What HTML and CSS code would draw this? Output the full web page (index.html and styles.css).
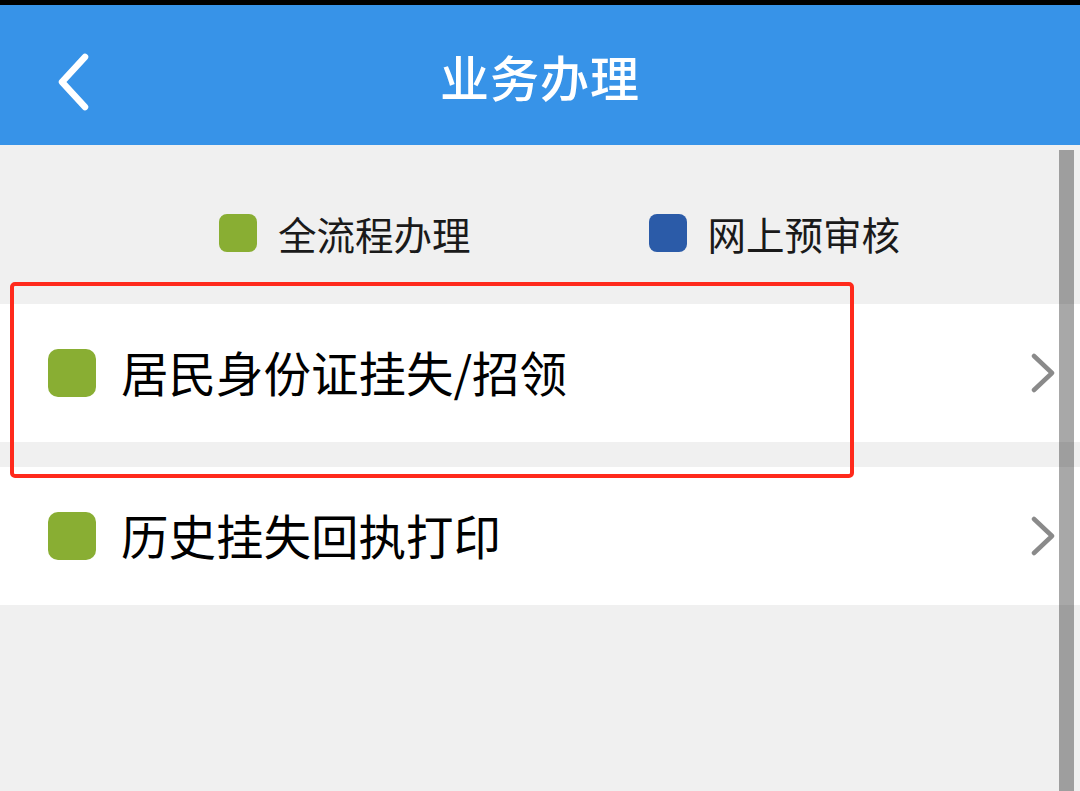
FILE: index.html
```html
<!DOCTYPE html>
<html lang="zh-CN">
<head>
<meta charset="utf-8">
<link rel="stylesheet" href="styles.css">
</head>
<body>
<div class="status"></div>
<header class="topbar">
  <svg class="back" width="40" height="60" viewBox="0 0 40 60"><path d="M31 5 L8 30 L31 55" fill="none" stroke="#fff" stroke-width="6.5" stroke-linecap="round" stroke-linejoin="round"/></svg>
  <h1 class="title">业务办理</h1>
</header>
<main class="content">
  <div class="legend">
    <div class="legend-item"><span class="dot green"></span><span>全流程办理</span></div>
    <div class="legend-item"><span class="dot blue"></span><span>网上预审核</span></div>
  </div>
  <div class="list">
    <div class="row">
      <span class="mark green"></span>
      <span class="label">居民身份证挂失/招领</span>
      <svg class="chev" width="26" height="40" viewBox="0 0 26 40"><path d="M4 3 L22 20 L4 37" fill="none" stroke="#8a8a8a" stroke-width="4.5" stroke-linecap="round" stroke-linejoin="round"/></svg>
    </div>
    <div class="row">
      <span class="mark green"></span>
      <span class="label">历史挂失回执打印</span>
      <svg class="chev" width="26" height="40" viewBox="0 0 26 40"><path d="M4 3 L22 20 L4 37" fill="none" stroke="#8a8a8a" stroke-width="4.5" stroke-linecap="round" stroke-linejoin="round"/></svg>
    </div>
  </div>
  <div class="highlight"></div>
  <div class="scrollbar"></div>
</main>
</body>
</html>
```
FILE: styles.css
```css
html, body {
  margin: 0;
  padding: 0;
}
body {
  width: 1080px;
  height: 791px;
  overflow: hidden;
  background: #f0f0f0;
  font-family: "Noto Sans CJK SC", "Noto Sans", sans-serif;
  color: #111;
}
.status {
  height: 5px;
  background: #000;
}
.topbar {
  height: 140px;
  background: #3793e8;
  display: flex;
  align-items: center;
  justify-content: center;
  position: relative;
}
.back {
  position: absolute;
  left: 54px;
  top: 47px;
}
.title {
  margin: 0;
  color: #fff;
  font-size: 49px;
  font-weight: 500;
  letter-spacing: 1px;
}
.content {
  position: relative;
  height: 646px;
}
.legend {
  height: 159px;
  display: flex;
  align-items: center;
  padding-left: 219px;
  gap: 178px;
  box-sizing: border-box;
  padding-top: 16px;
}
.legend-item {
  display: flex;
  align-items: center;
  gap: 21px;
  font-size: 38.5px;
  color: #1a1a1a;
}
.dot {
  width: 38px;
  height: 38px;
  border-radius: 8px;
  display: inline-block;
}
.green { background: #89ae33; }
.blue { background: #2b5ba8; }
.list {
  display: flex;
  flex-direction: column;
  gap: 25px;
}
.row {
  height: 138px;
  background: #fff;
  display: flex;
  align-items: center;
  padding-left: 48px;
  padding-right: 24px;
}
.mark {
  width: 48px;
  height: 48px;
  border-radius: 10px;
  flex: none;
}
.label {
  margin-left: 25px;
  font-size: 47.5px;
  color: #000;
  flex: 1;
  margin-top: -4px;
}
.chev {
  margin-right: 0;
}
.highlight {
  position: absolute;
  left: 10px;
  top: 137px;
  width: 836px;
  height: 188px;
  border: 4px solid #ff2a1c;
  border-radius: 5px;
}
.scrollbar {
  position: absolute;
  left: 1059px;
  top: 5px;
  width: 15px;
  bottom: 0;
  background: rgba(0, 0, 0, 0.34);
}
```
